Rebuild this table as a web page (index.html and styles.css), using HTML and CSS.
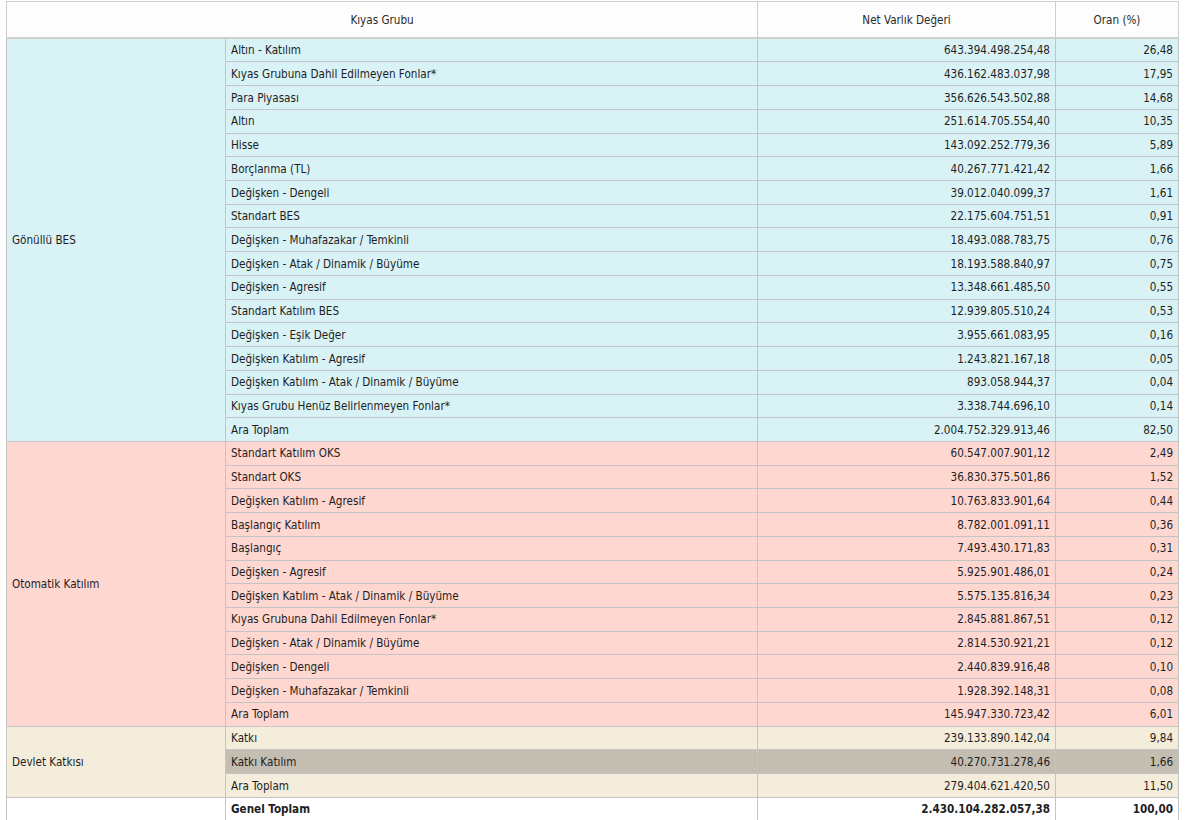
FILE: index.html
```html
<!DOCTYPE html>
<html lang="tr">
<head>
<meta charset="utf-8">
<title>Kıyas Grubu</title>
<link rel="stylesheet" href="styles.css">
</head>
<body>
<table class="grid">
  <colgroup>
    <col class="c1"><col class="c2"><col class="c3"><col class="c4">
  </colgroup>
  <thead>
    <tr><th colspan="2">Kıyas Grubu</th><th>Net Varlık Değeri</th><th>Oran (%)</th></tr>
  </thead>
  <tbody class="g-blue">
    <tr><td class="grp" rowspan="17">Gönüllü BES</td><td>Altın - Katılım</td><td class="num">643.394.498.254,48</td><td class="num">26,48</td></tr>
    <tr><td>Kıyas Grubuna Dahil Edilmeyen Fonlar*</td><td class="num">436.162.483.037,98</td><td class="num">17,95</td></tr>
    <tr><td>Para Piyasası</td><td class="num">356.626.543.502,88</td><td class="num">14,68</td></tr>
    <tr><td>Altın</td><td class="num">251.614.705.554,40</td><td class="num">10,35</td></tr>
    <tr><td>Hisse</td><td class="num">143.092.252.779,36</td><td class="num">5,89</td></tr>
    <tr><td>Borçlanma (TL)</td><td class="num">40.267.771.421,42</td><td class="num">1,66</td></tr>
    <tr><td>Değişken - Dengeli</td><td class="num">39.012.040.099,37</td><td class="num">1,61</td></tr>
    <tr><td>Standart BES</td><td class="num">22.175.604.751,51</td><td class="num">0,91</td></tr>
    <tr><td>Değişken - Muhafazakar / Temkinli</td><td class="num">18.493.088.783,75</td><td class="num">0,76</td></tr>
    <tr><td>Değişken - Atak / Dinamik / Büyüme</td><td class="num">18.193.588.840,97</td><td class="num">0,75</td></tr>
    <tr><td>Değişken - Agresif</td><td class="num">13.348.661.485,50</td><td class="num">0,55</td></tr>
    <tr><td>Standart Katılım BES</td><td class="num">12.939.805.510,24</td><td class="num">0,53</td></tr>
    <tr><td>Değişken - Eşik Değer</td><td class="num">3.955.661.083,95</td><td class="num">0,16</td></tr>
    <tr><td>Değişken Katılım - Agresif</td><td class="num">1.243.821.167,18</td><td class="num">0,05</td></tr>
    <tr><td>Değişken Katılım - Atak / Dinamik / Büyüme</td><td class="num">893.058.944,37</td><td class="num">0,04</td></tr>
    <tr><td>Kıyas Grubu Henüz Belirlenmeyen Fonlar*</td><td class="num">3.338.744.696,10</td><td class="num">0,14</td></tr>
    <tr><td>Ara Toplam</td><td class="num">2.004.752.329.913,46</td><td class="num">82,50</td></tr>
  </tbody>
  <tbody class="g-pink">
    <tr><td class="grp" rowspan="12">Otomatik Katılım</td><td>Standart Katılım OKS</td><td class="num">60.547.007.901,12</td><td class="num">2,49</td></tr>
    <tr><td>Standart OKS</td><td class="num">36.830.375.501,86</td><td class="num">1,52</td></tr>
    <tr><td>Değişken Katılım - Agresif</td><td class="num">10.763.833.901,64</td><td class="num">0,44</td></tr>
    <tr><td>Başlangıç Katılım</td><td class="num">8.782.001.091,11</td><td class="num">0,36</td></tr>
    <tr><td>Başlangıç</td><td class="num">7.493.430.171,83</td><td class="num">0,31</td></tr>
    <tr><td>Değişken - Agresif</td><td class="num">5.925.901.486,01</td><td class="num">0,24</td></tr>
    <tr><td>Değişken Katılım - Atak / Dinamik / Büyüme</td><td class="num">5.575.135.816,34</td><td class="num">0,23</td></tr>
    <tr><td>Kıyas Grubuna Dahil Edilmeyen Fonlar*</td><td class="num">2.845.881.867,51</td><td class="num">0,12</td></tr>
    <tr><td>Değişken - Atak / Dinamik / Büyüme</td><td class="num">2.814.530.921,21</td><td class="num">0,12</td></tr>
    <tr><td>Değişken - Dengeli</td><td class="num">2.440.839.916,48</td><td class="num">0,10</td></tr>
    <tr><td>Değişken - Muhafazakar / Temkinli</td><td class="num">1.928.392.148,31</td><td class="num">0,08</td></tr>
    <tr><td>Ara Toplam</td><td class="num">145.947.330.723,42</td><td class="num">6,01</td></tr>
  </tbody>
  <tbody class="g-beige">
    <tr><td class="grp" rowspan="3">Devlet Katkısı</td><td>Katkı</td><td class="num">239.133.890.142,04</td><td class="num">9,84</td></tr>
    <tr class="hl"><td>Katkı Katılım</td><td class="num">40.270.731.278,46</td><td class="num">1,66</td></tr>
    <tr><td>Ara Toplam</td><td class="num">279.404.621.420,50</td><td class="num">11,50</td></tr>
  </tbody>
  <tbody class="g-total">
    <tr><td class="grp"></td><td>Genel Toplam</td><td class="num">2.430.104.282.057,38</td><td class="num">100,00</td></tr>
  </tbody>
</table>
</body>
</html>
```

FILE: styles.css
```css
html, body {
  margin: 0;
  padding: 0;
  background: #ffffff;
}

body {
  font-family: "DejaVu Sans Condensed", "DejaVu Sans", sans-serif;
  font-size: 11.6px;
  color: #1e1e1e;
}

.grid {
  border-collapse: collapse;
  table-layout: fixed;
  width: 1172px;
  margin: 1px 0 0 6px;
  border: 1px solid #cfcfcf;
}

.c1 { width: 219px; }
.c2 { width: 532px; }
.c3 { width: 298px; }
.c4 { width: 123px; }

.grid th {
  font-weight: normal;
  color: #2a2a2a;
  text-align: center;
  background: #fdfdfd;
  line-height: 15.72px;
  padding: 11px 5px 8px;
  border: 1px solid #cfcfcf;
  border-bottom: 2px solid #cfcfcf;
}

.grid td {
  line-height: 15.72px;
  padding: 4.5px 5px 2.5px 5px;
  border: 1px solid #c4c4c4;
  white-space: nowrap;
}

.grid td.num {
  text-align: right;
}

.grid td.grp {
  vertical-align: middle;
}

.g-blue td { background: #d9f2f6; }
.g-pink td { background: #ffd7d1; }
.g-beige td { background: #f4eddc; }
.g-beige tr.hl td { background: #c3bdb2; }
.g-total td {
  background: #ffffff;
  font-weight: bold;
}
```
